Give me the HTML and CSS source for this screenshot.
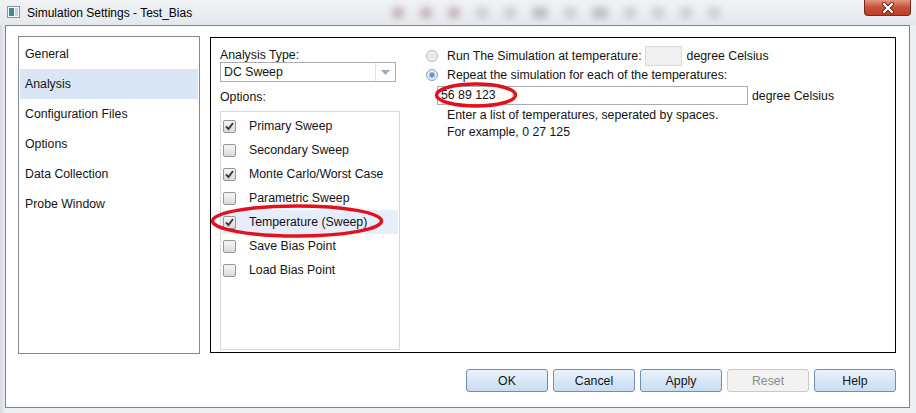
FILE: index.html
```html
<!DOCTYPE html>
<html>
  <head>
    <title>Simulation Settings - Test_Bias</title>
    <link rel="stylesheet" href="styles.css">
  </head>
  <body>
    <div class="window">
      <div class="titlebar">
        <svg class="app-icon" width="13" height="12" viewBox="0 0 13 12">
          <rect x="0.5" y="0.5" width="12" height="11" fill="#f4f6f8" stroke="#8a96a3"/>
          <rect x="2" y="2" width="5" height="8" fill="#3f8a8c"/>
          <rect x="8" y="2" width="3" height="8" fill="#c9d3dc"/>
        </svg>
        <span class="title">Simulation Settings - Test_Bias</span>
        <div class="toolbar-blur">
          <span class="blob b1"></span>
          <span class="blob b2"></span>
          <span class="blob b3"></span>
          <span class="blob b4"></span>
          <span class="blob b5"></span>
          <span class="blob b6"></span>
          <span class="blob b7"></span>
          <span class="blob b8"></span>
          <span class="blob b9"></span>
          <span class="blob b10"></span>
          <span class="blob b11"></span>
          <span class="blob b12"></span>
        </div>
        <button class="close-button">
          <svg width="16" height="12" viewBox="0 0 16 12">
            <path d="M4 2 L12 10 M12 2 L4 10" stroke="#6b2a20" stroke-width="4" stroke-linecap="round"/>
            <path d="M4 2 L12 10 M12 2 L4 10" stroke="#ffffff" stroke-width="2.2" stroke-linecap="round"/>
          </svg>
        </button>
      </div>

      <div class="frame">
        <div class="content">
          <ul class="nav">
            <li class="nav-item">General</li>
            <li class="nav-item selected">Analysis</li>
            <li class="nav-item">Configuration Files</li>
            <li class="nav-item">Options</li>
            <li class="nav-item">Data Collection</li>
            <li class="nav-item">Probe Window</li>
          </ul>

          <div class="panel">
            <div class="left-col">
              <div class="label">Analysis Type:</div>
              <div class="dropdown">
                <span class="dropdown-value">DC Sweep</span>
                <span class="dropdown-arrow">
                  <svg width="9" height="5" viewBox="0 0 9 5"><path d="M0 0 L9 0 L4.5 5 Z" fill="#98a9ba"/></svg>
                </span>
              </div>
              <div class="label options-label">Options:</div>
              <ul class="options">
                <li class="option"><span class="checkbox"><svg width="11" height="11" viewBox="0 0 11 11"><path d="M2 5.5 L4.5 8 L9 2" fill="none" stroke="#3a3a3a" stroke-width="2"/></svg></span>Primary Sweep</li>
                <li class="option"><span class="checkbox"></span>Secondary Sweep</li>
                <li class="option"><span class="checkbox"><svg width="11" height="11" viewBox="0 0 11 11"><path d="M2 5.5 L4.5 8 L9 2" fill="none" stroke="#3a3a3a" stroke-width="2"/></svg></span>Monte Carlo/Worst Case</li>
                <li class="option"><span class="checkbox"></span>Parametric Sweep</li>
                <li class="option selected"><span class="checkbox"><svg width="11" height="11" viewBox="0 0 11 11"><path d="M2 5.5 L4.5 8 L9 2" fill="none" stroke="#3a3a3a" stroke-width="2"/></svg></span>Temperature (Sweep)</li>
                <li class="option"><span class="checkbox"></span>Save Bias Point</li>
                <li class="option"><span class="checkbox"></span>Load Bias Point</li>
              </ul>
            </div>

            <div class="right-col">
              <div class="radio-row">
                <span class="radio"></span>
                <span>Run The Simulation at temperature:</span>
                <span class="small-input"></span>
                <span class="unit">degree Celsius</span>
              </div>
              <div class="radio-row second">
                <span class="radio checked"></span>
                <span>Repeat the simulation for each of the temperatures:</span>
              </div>
              <div class="input-row">
                <span class="text-input">56 89 123</span>
                <span class="unit-wide">degree Celsius</span>
              </div>
              <div class="hint first">Enter a list of temperatures, seperated by spaces.</div>
              <div class="hint">For example, 0 27 125</div>
            </div>
          </div>
        </div>

        <div class="buttons">
          <button class="dialog-button">OK</button>
          <button class="dialog-button">Cancel</button>
          <button class="dialog-button">Apply</button>
          <button class="dialog-button disabled">Reset</button>
          <button class="dialog-button">Help</button>
        </div>
      </div>

      <svg class="mark mark-temp" width="174" height="36" viewBox="0 0 174 36">
        <ellipse cx="87" cy="18" rx="84.5" ry="15" fill="none" stroke="#e4101c" stroke-width="3.5"/>
      </svg>
      <svg class="mark mark-values" width="84" height="28" viewBox="0 0 84 28">
        <ellipse cx="42" cy="14" rx="39.5" ry="11" fill="none" stroke="#e4101c" stroke-width="3.5"/>
      </svg>
    </div>
  </body>
</html>
```

FILE: styles.css
```css
body {
  margin: 0;
  background-color: rgb(226, 230, 236);
  font-family: "Liberation Sans", Arial, sans-serif;
  font-size: 12.3px;
  color: rgb(20, 20, 20);
}

.window {
  position: relative;
  width: 916px;
  height: 413px;
  overflow: hidden;
  background: linear-gradient(to right, rgb(214, 218, 224), rgb(236, 238, 242) 6px, rgb(236, 238, 242));
}

.titlebar {
  height: 25px;
  display: flex;
  align-items: center;
  padding-left: 7px;
  background: linear-gradient(to bottom, rgb(240, 242, 245), rgb(228, 232, 237));
}

.app-icon {
  margin-top: -1px;
}

.title {
  margin-left: 7px;
  font-size: 12px;
  color: black;
  white-space: nowrap;
}

.toolbar-blur {
  flex: 1;
  height: 25px;
  display: flex;
  align-items: center;
  padding-left: 200px;
  gap: 16px;
}

.blob {
  display: block;
  width: 12px;
  height: 12px;
  border-radius: 4px;
  background-color: rgb(205, 208, 213);
  filter: blur(3px);
}

.b1, .b2, .b3 {
  background-color: rgb(200, 186, 188);
}

.b6, .b8 {
  background-color: rgb(190, 194, 200);
  width: 16px;
}

.close-button {
  align-self: flex-start;
  width: 47px;
  height: 16px;
  margin-right: 5px;
  padding: 0;
  border: solid 1px rgb(120, 40, 30);
  border-top: none;
  border-radius: 0 0 4px 4px;
  background: linear-gradient(to bottom, rgb(228, 150, 130), rgb(200, 80, 58) 50%, rgb(190, 60, 40));
  display: flex;
  align-items: center;
  justify-content: center;
}

.frame {
  box-sizing: border-box;
  margin-left: 5px;
  width: 905px;
  height: 383px;
  border: solid 1px rgb(130, 130, 130);
  background-color: white;
  padding: 10px 13px 0 12px;
}

.content {
  display: flex;
  align-items: flex-start;
}

.nav {
  box-sizing: border-box;
  width: 182px;
  height: 318px;
  margin: 0;
  padding: 2px 1px;
  list-style: none;
  border: solid 1px rgb(130, 135, 144);
}

.nav-item {
  height: 30px;
  line-height: 30px;
  padding-left: 5px;
}

.nav-item.selected {
  background-color: rgb(217, 230, 245);
}

.panel {
  box-sizing: border-box;
  display: flex;
  width: 686px;
  height: 316px;
  margin-top: 1px;
  margin-left: 10px;
  padding-left: 9px;
  border: solid 1px black;
}

.left-col {
  width: 180px;
  padding-top: 10px;
}

.label {
  line-height: 14px;
}

.dropdown {
  box-sizing: border-box;
  display: flex;
  width: 176px;
  height: 20px;
  border: solid 1px rgb(171, 173, 179);
}

.dropdown-value {
  flex: 1;
  line-height: 18px;
  padding-left: 3px;
}

.dropdown-arrow {
  width: 19px;
  border-left: solid 1px rgb(226, 228, 232);
  display: flex;
  align-items: center;
  justify-content: center;
}

.options-label {
  margin-top: 8px;
}

.options {
  box-sizing: border-box;
  width: 180px;
  height: 239px;
  margin: 7px 0 0 0;
  padding: 2px 1px 0 1px;
  list-style: none;
  border: solid 1px rgb(217, 217, 217);
}

.option {
  height: 24px;
  display: flex;
  align-items: center;
}

.option.selected {
  background-color: rgb(229, 238, 250);
}

.checkbox {
  box-sizing: border-box;
  width: 13px;
  height: 13px;
  margin-left: 1px;
  margin-right: 13px;
  border: solid 1px rgb(150, 150, 150);
  border-radius: 2px;
  background: linear-gradient(to bottom, rgb(246, 246, 246), rgb(218, 218, 218));
  display: flex;
  align-items: center;
  justify-content: center;
}

.right-col {
  margin-left: 26px;
  padding-top: 8px;
}

.radio-row {
  height: 20px;
  display: flex;
  align-items: center;
  white-space: nowrap;
}

.radio-row.second {
  height: 18px;
}

.radio {
  box-sizing: border-box;
  width: 12px;
  height: 12px;
  margin-right: 9px;
  border-radius: 50%;
  border: solid 1px rgb(175, 180, 186);
  background: radial-gradient(circle, rgb(226, 230, 235) 30%, rgb(246, 247, 249) 75%);
}

.radio.checked {
  border-color: rgb(140, 160, 185);
  background: radial-gradient(circle, rgb(90, 140, 200) 0, rgb(110, 155, 210) 30%, rgb(220, 230, 242) 45%, rgb(240, 244, 249) 100%);
}

.small-input {
  box-sizing: border-box;
  width: 37px;
  height: 20px;
  margin-left: 3px;
  background-color: rgb(240, 240, 240);
  border: solid 1px rgb(218, 218, 218);
}

.unit {
  margin-left: 5px;
}

.input-row {
  display: flex;
  align-items: center;
  margin-top: 2px;
  padding-left: 11px;
  white-space: nowrap;
}

.text-input {
  box-sizing: border-box;
  width: 311px;
  height: 19px;
  line-height: 17px;
  padding-left: 3px;
  border: solid 1px rgb(171, 173, 179);
}

.unit-wide {
  margin-left: 4px;
}

.hint {
  padding-left: 21px;
  line-height: 17px;
}

.hint.first {
  margin-top: 2px;
}

.buttons {
  display: flex;
  justify-content: flex-end;
  gap: 5px;
  margin-top: 15px;
}

.dialog-button {
  width: 82px;
  height: 23px;
  padding: 0;
  font-family: "Liberation Sans", Arial, sans-serif;
  font-size: 12.3px;
  color: rgb(20, 20, 20);
  border: solid 1px rgb(112, 142, 176);
  border-radius: 3px;
  background: linear-gradient(to bottom, rgb(234, 242, 251), rgb(200, 220, 242));
}

.dialog-button.disabled {
  color: rgb(140, 140, 140);
  border-color: rgb(200, 200, 200);
  background: rgb(242, 242, 242);
}

.mark {
  position: absolute;
}

.mark-temp {
  left: 210px;
  top: 203px;
}

.mark-values {
  left: 434px;
  top: 81px;
}
```
